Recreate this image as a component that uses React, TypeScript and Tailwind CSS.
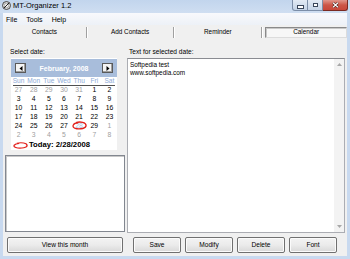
import React from "react";

function TitleIcon() {
  return (
    <svg width="9" height="9" viewBox="0 0 9 9" className="ml-[2px] mt-[1px] shrink-0">
      <circle cx="4.5" cy="4.5" r="4" fill="#d9d9d9" stroke="#3a3a3a" strokeWidth="0.9" />
      <circle cx="4.5" cy="4.5" r="2.2" fill="#f4f4f4" stroke="#777" strokeWidth="0.5" />
      <path d="M2 7 L7 2" stroke="#222" strokeWidth="1" />
    </svg>
  );
}

function RedLoop({ w, h }: { w: number; h: number }) {
  return (
    <svg width={w} height={h} viewBox="0 0 16 9" preserveAspectRatio="none">
      <path
        d="M4 1.6 C9 0.4 15 1.2 15 4.5 C15 7.6 9 8.2 5 7.8 C1.6 7.4 0.6 5.6 1.4 4 C2.2 2.6 4.2 2 6.5 1.8"
        fill="none"
        stroke="#e3211c"
        strokeWidth="1.4"
      />
    </svg>
  );
}

type Day = { n: number; g?: boolean; sel?: boolean };

const rows: Day[][] = [
  [{ n: 27, g: true }, { n: 28, g: true }, { n: 29, g: true }, { n: 30, g: true }, { n: 31, g: true }, { n: 1 }, { n: 2 }],
  [{ n: 3 }, { n: 4 }, { n: 5 }, { n: 6 }, { n: 7 }, { n: 8 }, { n: 9 }],
  [{ n: 10 }, { n: 11 }, { n: 12 }, { n: 13 }, { n: 14 }, { n: 15 }, { n: 16 }],
  [{ n: 17 }, { n: 18 }, { n: 19 }, { n: 20 }, { n: 21 }, { n: 22 }, { n: 23 }],
  [{ n: 24 }, { n: 25 }, { n: 26 }, { n: 27 }, { n: 28, sel: true }, { n: 29 }, { n: 1, g: true }],
  [{ n: 2, g: true }, { n: 3, g: true }, { n: 4, g: true }, { n: 5, g: true }, { n: 6, g: true }, { n: 7, g: true }, { n: 8, g: true }],
];

const dayNames = ["Sun", "Mon", "Tue", "Wed", "Thu", "Fri", "Sat"];

function WinButton({ label, className }: { label: string; className: string }) {
  return (
    <div
      className={
        "h-[16px] flex items-center justify-center rounded-[2px] border border-[#707070] bg-gradient-to-b from-[#f3f3f3] via-[#ebebeb] to-[#d8d8d8] shadow-[inset_0_0_0_1px_#fbfbfb] text-[6.6px] leading-none " +
        className
      }
    >
      {label}
    </div>
  );
}

function NavButton({ dir }: { dir: "l" | "r" }) {
  return (
    <div className="w-[11px] h-[10px] flex items-center justify-center bg-[#f4f4f4] border border-[#5a5a5a] shadow-[inset_-1px_-1px_0_#a0a0a0]">
      <svg width="4" height="5" viewBox="0 0 4 5">
        {dir === "l" ? <path d="M3.5 0 L0.5 2.5 L3.5 5 Z" fill="#000" /> : <path d="M0.5 0 L3.5 2.5 L0.5 5 Z" fill="#000" />}
      </svg>
    </div>
  );
}

export default function App() {
  return (
    <div className="w-[350px] h-[259px] overflow-hidden flex flex-col bg-[#c8d9ef] font-['Liberation_Sans',Arial,sans-serif] text-black">
      {/* Title bar */}
      <div className="h-[13px] flex items-start bg-gradient-to-b from-[#c2d5ed] to-[#cfdef1] shrink-0">
        <TitleIcon />
        <span className="ml-[2px] text-[7.5px] leading-[11px] text-black">MT-Organizer 1.2</span>
        <div className="ml-auto mr-[2px] flex">
          <div className="w-[16px] h-[11px] rounded-bl-[3px] border border-[#7c8ea8] border-t-0 bg-gradient-to-b from-[#e2eaf4] to-[#c4d3e6] flex items-center justify-center">
            <div className="w-[5px] h-[2px] mt-[3px] bg-white border border-[#39465a] box-content" />
          </div>
          <div className="w-[15px] h-[11px] border-b border-r border-[#7c8ea8] bg-gradient-to-b from-[#e2eaf4] to-[#c4d3e6] flex items-center justify-center">
            <div className="w-[5px] h-[4px] border border-[#39465a] shadow-[inset_0_0_0_1px_#ffffff]" />
          </div>
          <div className="w-[25px] h-[11px] rounded-br-[3px] border border-t-0 border-l-0 border-[#7a2a22] bg-gradient-to-b from-[#e0968c] via-[#cc5647] to-[#c8473a] flex items-center justify-center">
            <svg width="7" height="6" viewBox="0 0 7 6">
              <path d="M1 0.8 L6 5.2 M6 0.8 L1 5.2" stroke="#3a1410" strokeWidth="2.2" />
              <path d="M1 0.8 L6 5.2 M6 0.8 L1 5.2" stroke="#ffffff" strokeWidth="1.2" />
            </svg>
          </div>
        </div>
      </div>

      {/* Client area */}
      <div className="flex-1 flex flex-col mx-[3px] mb-[3px] bg-[#f0f0f0]">
        {/* Menu bar */}
        <div className="h-[12px] flex items-center gap-[9px] pl-[3px] bg-gradient-to-b from-[#f8f9fc] to-[#edf1f7] text-[7px] leading-none">
          <span>File</span>
          <span>Tools</span>
          <span>Help</span>
        </div>

        {/* Tab strip */}
        <div className="h-[16px] pt-[2px] flex items-start text-[6.4px] leading-none">
          <div className="w-[83px] h-[11px] flex items-center justify-center">Contacts</div>
          <div className="w-[2px] h-[11px] border-l border-[#a0a0a0] border-r border-r-white" />
          <div className="w-[85px] h-[11px] flex items-center justify-center">Add Contacts</div>
          <div className="w-[2px] h-[11px] border-l border-[#a0a0a0] border-r border-r-white" />
          <div className="w-[87px] h-[11px] flex items-center justify-center">Reminder</div>
          <div className="w-[2px] h-[11px] border-l border-[#a0a0a0] border-r border-r-white" />
          <div className="w-[82px] ml-[2px] h-[11px] flex items-center justify-center border border-[#8a8a8a] border-b-[#dcdcdc] border-r-[#dcdcdc] bg-[#f7f7f7] shadow-[inset_1px_1px_0_#c8c8c8]">
            Calendar
          </div>
        </div>

        {/* Body */}
        <div className="flex-1 flex text-[6.6px]">
          {/* Left column */}
          <div className="w-[123px] pl-[2px] flex flex-col">
            <div className="pt-[7px] pl-[5px] h-[15px] leading-[8px]">Select date:</div>
            <div className="ml-[6px] mt-[2px] w-[106px] h-[92px] bg-white pt-[1px] flex flex-col">
              <div className="h-[18px] bg-[#a8bddb] flex items-center px-[4px]">
                <NavButton dir="l" />
                <div className="flex-1 text-center text-white font-bold text-[7px] leading-none">February, 2008</div>
                <NavButton dir="r" />
              </div>
              <div className="grid grid-cols-7 h-[8px] items-center text-[#8eaad6] leading-none">
                {dayNames.map((d) => (
                  <div key={d} className="text-center">{d}</div>
                ))}
              </div>
              <div className="mx-[2px] h-px bg-[#505050]" />
              {rows.map((r, i) => (
                <div key={i} className="grid grid-cols-7 h-[9px] items-center leading-none text-[6.8px]">
                  {r.map((d, j) => (
                    <div
                      key={j}
                      className={
                        "relative text-center " +
                        (d.sel ? "text-[#a9c0e3]" : d.g ? "text-[#a0a0a0]" : "text-black")
                      }
                    >
                      {d.n}
                      {d.sel && (
                        <div className="absolute left-0 top-[-2px]">
                          <RedLoop w={15} h={9} />
                        </div>
                      )}
                    </div>
                  ))}
                </div>
              ))}
              <div className="h-[10px] flex items-center pl-[2px] gap-[1px]">
                <RedLoop w={15} h={7} />
                <span className="font-bold text-[7.7px] leading-none">Today: 2/28/2008</span>
              </div>
            </div>
            <div className="mt-[5px] w-[120px] h-[77px] bg-white border border-[#828790] shadow-[inset_1px_1px_0_#c8c8c8]" />
            <WinButton label="View this month" className="mt-[5px] ml-[2px] w-[116px]" />
          </div>

          {/* Right column */}
          <div className="flex-1 flex flex-col pr-[2px]">
            <div className="pt-[7px] pl-[3px] h-[15px] leading-[8px]">Text for selected date:</div>
            <div className="mt-[2px] ml-[1px] h-[175px] bg-white border border-[#abadb3] border-t-[#8a8c92] flex">
              <div className="flex-1 pl-[2px] pt-[2px] text-[6.4px] leading-[8px]">
                <div>Softpedia test</div>
                <div>www.softpedia.com</div>
              </div>
              <div className="w-[10px] bg-[#f3f3f3] flex flex-col items-center justify-between py-[4px]">
                <svg width="5" height="3" viewBox="0 0 5 3">
                  <path d="M0 3 L2.5 0 L5 3 Z" fill="#a8a8a8" />
                </svg>
                <svg width="5" height="3" viewBox="0 0 5 3">
                  <path d="M0 0 L2.5 3 L5 0 Z" fill="#a8a8a8" />
                </svg>
              </div>
            </div>
            <div className="mt-[4px] ml-[7px] flex gap-[4px]">
              <WinButton label="Save" className="w-[48px]" />
              <WinButton label="Modify" className="w-[48px]" />
              <WinButton label="Delete" className="w-[48px]" />
              <WinButton label="Font" className="w-[48px]" />
            </div>
          </div>
        </div>
      </div>
    </div>
  );
}
